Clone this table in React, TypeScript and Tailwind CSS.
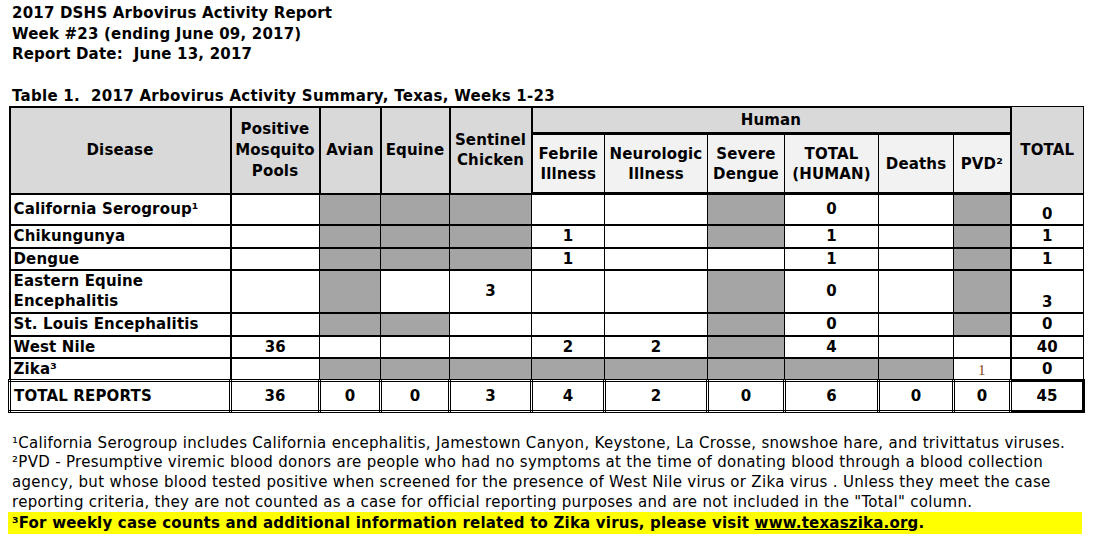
const hatch =
  "bg-[repeating-conic-gradient(#727272_0_25%,#d8d8d8_0_50%)] bg-size-[2px_2px]"

type Cell = { v?: string; h?: boolean }

const rows: { name: string; cls: string; tot: string; totBottom?: boolean; cells: Cell[] }[] = [
  {
    name: "California Serogroup¹",
    cls: "h-[31px]",
    tot: "0",
    totBottom: true,
    cells: [{}, { h: true }, { h: true }, { h: true }, {}, {}, { h: true }, { v: "0" }, {}, { h: true }],
  },
  {
    name: "Chikungunya",
    cls: "h-[23px]",
    tot: "1",
    cells: [{}, { h: true }, { h: true }, { h: true }, { v: "1" }, {}, { h: true }, { v: "1" }, {}, { h: true }],
  },
  {
    name: "Dengue",
    cls: "h-[22px]",
    tot: "1",
    cells: [{}, { h: true }, { h: true }, { h: true }, { v: "1" }, {}, {}, { v: "1" }, {}, { h: true }],
  },
  {
    name: "Eastern Equine Encephalitis",
    cls: "h-[43px]",
    tot: "3",
    totBottom: true,
    cells: [{}, { h: true }, {}, { v: "3" }, {}, {}, { h: true }, { v: "0" }, {}, { h: true }],
  },
  {
    name: "St. Louis Encephalitis",
    cls: "h-[23px]",
    tot: "0",
    cells: [{}, { h: true }, { h: true }, {}, {}, {}, { h: true }, { v: "0" }, {}, { h: true }],
  },
  {
    name: "West Nile",
    cls: "h-[22px]",
    tot: "40",
    cells: [{ v: "36" }, {}, {}, {}, { v: "2" }, { v: "2" }, { h: true }, { v: "4" }, {}, {}],
  },
]

const widths = [
  "w-[221px]",
  "w-[89px]",
  "w-[61px]",
  "w-[69px]",
  "w-[82px]",
  "w-[73px]",
  "w-[103px]",
  "w-[77px]",
  "w-[94px]",
  "w-[75px]",
  "w-[57px]",
  "w-[73px]",
]

export default function App() {
  return (
    <div className="w-[1096px] h-[541px] bg-white px-[8px] pt-[3px] font-['DejaVu_Sans',sans-serif] text-black">
      {/* Report heading */}
      <div className="pl-[4px] text-[15px] font-bold leading-[20.5px] tracking-[0.2px]">
        <p>2017 DSHS Arbovirus Activity Report</p>
        <p>Week #23 (ending June 09, 2017)</p>
        <p>Report Date:&nbsp; June 13, 2017</p>
      </div>

      <p className="pl-[4px] mt-[21px] text-[15px] font-bold leading-[20px] tracking-[0.28px]">
        Table 1.&nbsp; 2017 Arbovirus Activity Summary, Texas, Weeks 1-23
      </p>

      {/* Summary table */}
      <table className="table-fixed border-collapse text-[15px] font-bold leading-[20px] tracking-[0.15px]">
        <colgroup>
          {widths.map((w, i) => (
            <col key={i} className={w} />
          ))}
        </colgroup>
        <thead>
          <tr className="h-[27px]">
            <th rowSpan={2} className="border-2 border-black bg-[#d9d9d9]">Disease</th>
            <th rowSpan={2} className="border-2 border-black bg-[#d9d9d9] leading-[21px]">
              Positive
              <br />
              Mosquito
              <br />
              Pools
            </th>
            <th rowSpan={2} className="border-2 border-black bg-[#d9d9d9]">Avian</th>
            <th rowSpan={2} className="border-2 border-black bg-[#d9d9d9]">Equine</th>
            <th rowSpan={2} className="border-2 border-black bg-[#d9d9d9]">
              Sentinel
              <br />
              Chicken
            </th>
            <th colSpan={6} className="border-2 border-b-[3px] border-black bg-[#d9d9d9]">Human</th>
            <th rowSpan={2} className="border border-black bg-[#d9d9d9]">TOTAL</th>
          </tr>
          <tr className="h-[60px] bg-[#f2f2f2]">
            <th className="border border-l-2 border-b-[3px] border-black">
              Febrile
              <br />
              Illness
            </th>
            <th className="border border-b-[3px] border-black">
              Neurologic
              <br />
              Illness
            </th>
            <th className="border border-b-[3px] border-black">
              Severe
              <br />
              Dengue
            </th>
            <th className="border border-b-[3px] border-black">
              TOTAL
              <br />
              (HUMAN)
            </th>
            <th className="border border-b-[3px] border-black">Deaths</th>
            <th className="border border-r-2 border-b-[3px] border-black">PVD²</th>
          </tr>
        </thead>
        <tbody>
          {rows.map((r) => (
            <tr key={r.name} className={r.cls}>
              <td className="border border-t-2 border-l-2 border-r-2 border-black pl-[3px] text-left align-middle">
                {r.name}
              </td>
              {r.cells.map((c, i) => (
                <td
                  key={i}
                  className={`border border-t-2 border-black text-center ${c.h ? hatch : ""}`}
                >
                  {c.v}
                </td>
              ))}
              <td
                className={`border border-t-2 border-l-2 border-black text-center ${
                  r.totBottom ? "align-bottom" : "align-middle"
                }`}
              >
                {r.tot}
              </td>
            </tr>
          ))}
          <tr className="h-[22px]">
            <td className="border border-t-2 border-l-2 border-r-2 border-black pl-[3px] text-left">
              Zika³
            </td>
            <td className="border border-t-2 border-black" />
            {Array.from({ length: 8 }).map((_, i) => (
              <td key={i} className={`border border-t-2 border-black ${hatch}`} />
            ))}
            <td className="border border-t-2 border-black text-center align-bottom font-['Liberation_Serif',serif] font-normal text-[#8a4a1a] leading-[18px]">
              1
            </td>
            <td className="border border-t-2 border-l-2 border-black text-center">0</td>
          </tr>
          <tr className="h-[31px]">
            <td className="border-[3px] border-double border-black pl-[3px] text-left">TOTAL REPORTS</td>
            {["36", "0", "0", "3", "4", "2", "0", "6", "0", "0", "45"].map((v, i) => (
              <td
                key={i}
                className={`border-[3px] border-double border-black text-center ${
                  i === 10 ? "border-solid border-l-2" : ""
                }`}
              >
                {v}
              </td>
            ))}
          </tr>
        </tbody>
      </table>

      {/* Footnotes */}
      <div className="mt-[21px] text-[15px] leading-[20px] tracking-[0.3px]">
        <p className="pl-[4px] leading-[18px]">
          ¹California Serogroup includes California encephalitis, Jamestown Canyon, Keystone, La Crosse, snowshoe
          hare, and trivittatus viruses.
        </p>
        <p className="pl-[4px] pr-[8px]">
          ²PVD - Presumptive viremic blood donors are people who had no symptoms at the time of donating blood through
          a blood collection agency, but whose blood tested positive when screened for the presence of West Nile virus
          or Zika virus . Unless they meet the case reporting criteria, they are not counted as a case for official
          reporting purposes and are not included in the "Total" column.
        </p>
        <p className="w-[1074px] bg-[#ffff00] pl-[4px] font-bold leading-[22px] tracking-[0.2px]">
          ³For weekly case counts and additional information related to Zika virus, please visit{" "}
          <span className="underline">www.texaszika.org</span>.
        </p>
      </div>
    </div>
  )
}
